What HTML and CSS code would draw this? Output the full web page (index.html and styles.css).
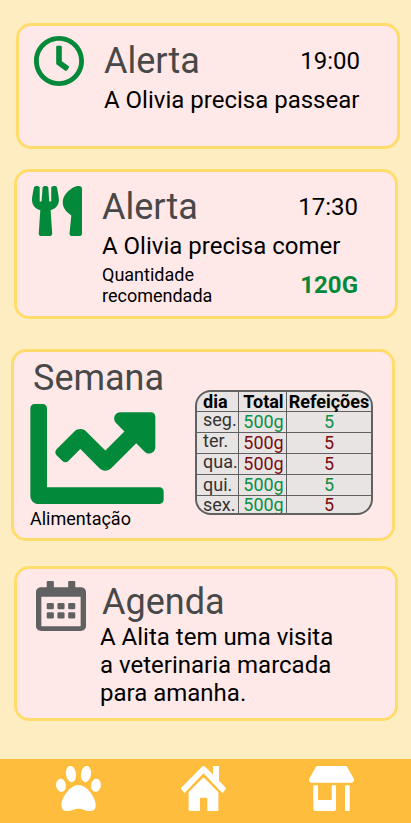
FILE: index.html
```html
<!DOCTYPE html>
<html lang="pt">
<head>
<meta charset="utf-8">
<meta name="viewport" content="width=device-width, initial-scale=1">
<title>Alertas</title>
<link rel="stylesheet" href="styles.css">
</head>
<body>
<main class="feed">
  <article class="card card-walk">
    <svg class="icon" viewBox="8 8 496 496" aria-hidden="true"><path d="M256 8C119 8 8 119 8 256s111 248 248 248 248-111 248-248S393 8 256 8zm0 448c-110.500 0-200-89.500-200-200S145.500 56 256 56s200 89.500 200 200-89.500 200-200 200zm61.800-104.400l-84.900-61.700c-3.100-2.300-4.900-5.900-4.900-9.700V116c0-6.600 5.400-12 12-12h32c6.600 0 12 5.400 12 12v141.700l66.800 48.600c5.400 3.900 6.500 11.400 2.600 16.800L334.600 349c-3.900 5.300-11.400 6.500-16.800 2.600z"/></svg>
    <div class="content">
      <header class="row">
        <h2 class="title">Alerta</h2>
        <time class="text">19:00</time>
      </header>
      <p class="text spaced">A Olivia precisa passear</p>
    </div>
  </article>

  <article class="card card-meal">
    <svg class="icon" viewBox="0 0 416 512" preserveAspectRatio="none" aria-hidden="true"><path d="M207.900 15.200c.8 4.700 16.100 94.500 16.100 128.800 0 52.300-27.800 89.600-68.900 104.600L168 486.700c.7 13.700-10.200 25.300-24 25.300H80c-13.700 0-24.700-11.500-24-25.300l12.900-238.100C27.700 233.600 0 196.200 0 144 0 109.600 15.300 19.900 16.100 15.200 19.300-5.100 61.400-5.400 64 16.300v141.200c1.300 3.400 15.100 3.200 16 0 1.400-25.300 7.900-139.200 8-141.800 3.300-20.800 44.700-20.800 47.900 0 .2 2.700 6.600 116.500 8 141.800.9 3.200 14.800 3.400 16 0V16.300c2.600-21.600 44.800-21.400 48-1.100zm119.200 285.700l-15 185.100c-1.200 14 9.900 26 23.900 26h56c13.300 0 24-10.700 24-24V24c0-13.200-10.700-24-24-24-82.500 0-221.400 178.500-64.900 300.900z"/></svg>
    <div class="content">
      <header class="row">
        <h2 class="title">Alerta</h2>
        <time class="text">17:30</time>
      </header>
      <p class="text spaced">A Olivia precisa comer</p>
      <div class="row spaced">
        <p class="small">Quantidade<br>recomendada</p>
        <strong class="text amount">120G</strong>
      </div>
    </div>
  </article>

  <article class="card card-week">
    <div>
      <h2 class="title">Semana</h2>
      <svg class="chart" viewBox="0 64 512 384" aria-hidden="true"><path d="M496 384H64V80c0-8.840-7.160-16-16-16H16C7.160 64 0 71.160 0 80v336c0 17.670 14.330 32 32 32h464c8.840 0 16-7.160 16-16v-32c0-8.840-7.160-16-16-16zM464 96H345.940c-21.380 0-32.090 25.850-16.970 40.970l32.400 32.400L288 242.750l-73.370-73.370c-12.500-12.500-32.760-12.500-45.250 0l-68.690 68.690c-6.250 6.250-6.250 16.380 0 22.630l22.620 22.620c6.250 6.250 16.380 6.250 22.630 0L192 237.250l73.370 73.370c12.500 12.500 32.760 12.500 45.250 0l96-96 32.400 32.400c15.120 15.120 40.970 4.410 40.970-16.970V112c.01-8.840-7.150-16-15.990-16z"/></svg>
      <p class="small">Alimentação</p>
    </div>
    <table class="meals">
      <thead>
        <tr><th class="day" scope="col">dia</th><th class="total" scope="col">Total</th><th scope="col">Refeições</th></tr>
      </thead>
      <tbody>
        <tr class="good"><th class="day raised" scope="row">seg.</th><td class="total">500g</td><td>5</td></tr>
        <tr class="bad"><th class="day raised" scope="row">ter.</th><td class="total">500g</td><td>5</td></tr>
        <tr class="bad"><th class="day raised" scope="row">qua.</th><td class="total">500g</td><td>5</td></tr>
        <tr class="good"><th class="day" scope="row">qui.</th><td class="total">500g</td><td>5</td></tr>
        <tr class="good"><th class="day" scope="row">sex.</th><td class="total">500g</td><td class="bad">5</td></tr>
      </tbody>
    </table>
  </article>

  <article class="card card-agenda">
    <svg class="icon" viewBox="0 0 448 512" preserveAspectRatio="none" aria-hidden="true">
      <path fill-rule="evenodd" d="M448 112v352c0 26.500-21.500 48-48 48H48c-26.500 0-48-21.500-48-48V112c0-26.500 21.500-48 48-48h48V12c0-6.600 5.400-12 12-12h40c6.600 0 12 5.400 12 12v52h128V12c0-6.600 5.400-12 12-12h40c6.600 0 12 5.400 12 12v52h48c26.500 0 48 21.500 48 48zM400 458V160H48v298c0 3.300 2.700 6 6 6h340c3.300 0 6-2.700 6-6z"/>
      <rect x="96" y="224" width="64" height="64" rx="12"/><rect x="192" y="224" width="64" height="64" rx="12"/><rect x="288" y="224" width="64" height="64" rx="12"/>
      <rect x="96" y="320" width="64" height="64" rx="12"/><rect x="192" y="320" width="64" height="64" rx="12"/><rect x="288" y="320" width="64" height="64" rx="12"/>
    </svg>
    <div class="content">
      <h2 class="title">Agenda</h2>
      <p class="text">A Alita tem uma visita<br>a veterinaria marcada<br>para amanha.</p>
    </div>
  </article>
</main>

<nav class="tabs">
  <a href="#pets" aria-label="Pets">
    <svg viewBox="0 0 45 45" aria-hidden="true"><ellipse cx="15" cy="8" rx="5" ry="8.200" transform="rotate(-8 15 8)"/><ellipse cx="30" cy="8" rx="5" ry="8.200" transform="rotate(8 30 8)"/><ellipse cx="5" cy="19.300" rx="4.900" ry="6.600" transform="rotate(-8 5 19.300)"/><ellipse cx="40" cy="19.300" rx="4.900" ry="6.600" transform="rotate(8 40 19.300)"/><path d="M22.500 19C31 19 39.700 31.500 39.700 39c0 4.500-2.200 6-5.700 6-5 0-7-2.300-11.500-2.300S16 45 11 45c-3.500 0-5.500-1.500-5.500-6C5.500 31.500 14 19 22.500 19z"/></svg>
  </a>
  <a href="#home" aria-label="Início">
    <svg viewBox="0 0 45 45" aria-hidden="true"><path d="M21.200.5q1.300-1 2.600 0l8.200 8V.6q0-.6.600-.6h4.800q.6 0 .6.600v14.200l6.700 7q.5.700 0 1.300l-2.600 3.400q-.6.600-1.200 0L22.500 7.300 4.100 26.500q-.6.600-1.200 0L.3 23.100q-.5-.6 0-1.300z"/><path d="M22.500 11.300l14.900 15V43.500q0 1.500-1.500 1.500h-9.600V33q0-1.200-1.200-1.200h-5q-1.200 0-1.200 1.200v12H9.100q-1.500 0-1.500-1.500V26.300z"/></svg>
  </a>
  <a href="#shop" aria-label="Loja">
    <svg viewBox="0 0 45 45" aria-hidden="true"><path d="M8.300 0h28.400q1 0 1.500 1L44.600 12.500Q46 16.700 42.500 16.700h-40Q-1 16.700.4 12.500L6.800 1q.5-1 1.500-1z"/><path d="M5 19.300h4V34h13.700V19.300H27V43q0 2-2 2H6.300q-2 0-2-2V20q0-.7.7-.7z"/><rect x="36" y="19.300" width="4.700" height="25.700" rx=".7"/></svg>
  </a>
</nav>
</body>
</html>
```
FILE: styles.css
```css
* {
  box-sizing: border-box;
}

body {
  margin: 0;
  min-height: 100vh;
  display: flex;
  flex-direction: column;
  background: #ffedc2;
  color: #000;
  font-family: Roboto, "Liberation Sans", sans-serif;
}

h2,
p {
  margin: 0;
  font-weight: 400;
}

.feed {
  padding: 23px 11px 38px;
}

.card {
  display: flex;
  border: 3px solid #ffdc6b;
  border-radius: 15px;
  background: #ffe9e8;
}

.card-walk {
  margin: 0 0 20px 5px;
  padding: 14px 18px 32px 15px;
  gap: 20px;
}

.card-walk .icon {
  margin-top: -4px;
}

.card-meal {
  margin: 0 2px 30px 3px;
  padding: 14px 18px 10px 15px;
  gap: 20px;
}

.card-week {
  margin: 0 5px 25px 0;
  padding: 5px 19px 9px 16px;
  justify-content: space-between;
  align-items: flex-end;
}

.card-agenda {
  margin: 0 2px 0 3px;
  padding: 12px 18px 11px 19px;
  gap: 14px;
}

.icon {
  flex: none;
  width: 50px;
  height: 50px;
  fill: #03893a;
}

.card-agenda .icon {
  fill: #616161;
}

.content {
  flex: 1;
}

.row {
  display: flex;
  justify-content: space-between;
  align-items: center;
  padding-right: 19px;
}

.title {
  color: #484848;
  font-size: 36px;
  line-height: 42px;
}

.card-week .title {
  padding-left: 3px;
}

.card-agenda .title {
  padding-left: 2px;
}

.text {
  font-size: 24px;
  line-height: 28px;
}

.small {
  font-size: 18px;
  line-height: 21px;
}

.spaced {
  margin-top: 4px;
}

.amount {
  color: #03893a;
  font-weight: 700;
}

.chart {
  display: block;
  width: 134px;
  height: 100px;
  margin: 5px 0 4px;
  fill: #03893a;
}

.meals {
  width: 178px;
  margin-bottom: 14px;
  table-layout: fixed;
  border: 2px solid #616161;
  border-radius: 16px;
  border-spacing: 0;
  overflow: hidden;
  background: #e8e4e3;
  font-size: 18px;
  line-height: 20px;
  text-align: center;
}

.meals th,
.meals td {
  padding: 0;
  border: 0 solid #616161;
  border-width: 0 1px 1px 0;
}

.meals tr > :last-child {
  border-right: 0;
}

.meals thead {
  line-height: 19px;
}

.meals tbody tr:last-child {
  line-height: 17px;
}

.meals tbody tr:last-child > * {
  border-bottom: 0;
}

.meals .day {
  width: 42px;
  padding-left: 6px;
  text-align: left;
}

.meals .total {
  width: 48px;
  padding-left: 2px;
}

.meals tbody .day {
  color: #343131;
  font-weight: 400;
}

.meals .raised {
  line-height: 16px;
  vertical-align: top;
}

.good {
  color: #0b8f43;
}

.bad {
  color: #7a0c10;
}

.tabs {
  display: grid;
  grid-template-columns: 155fr 95fr 160fr;
  height: 64px;
  margin-top: auto;
  padding-left: 1px;
  background: #ffbd3d;
}

.tabs a {
  display: flex;
  justify-content: center;
  padding-top: 7px;
}

.tabs svg {
  width: 45px;
  height: 45px;
  fill: #fff;
}
```
